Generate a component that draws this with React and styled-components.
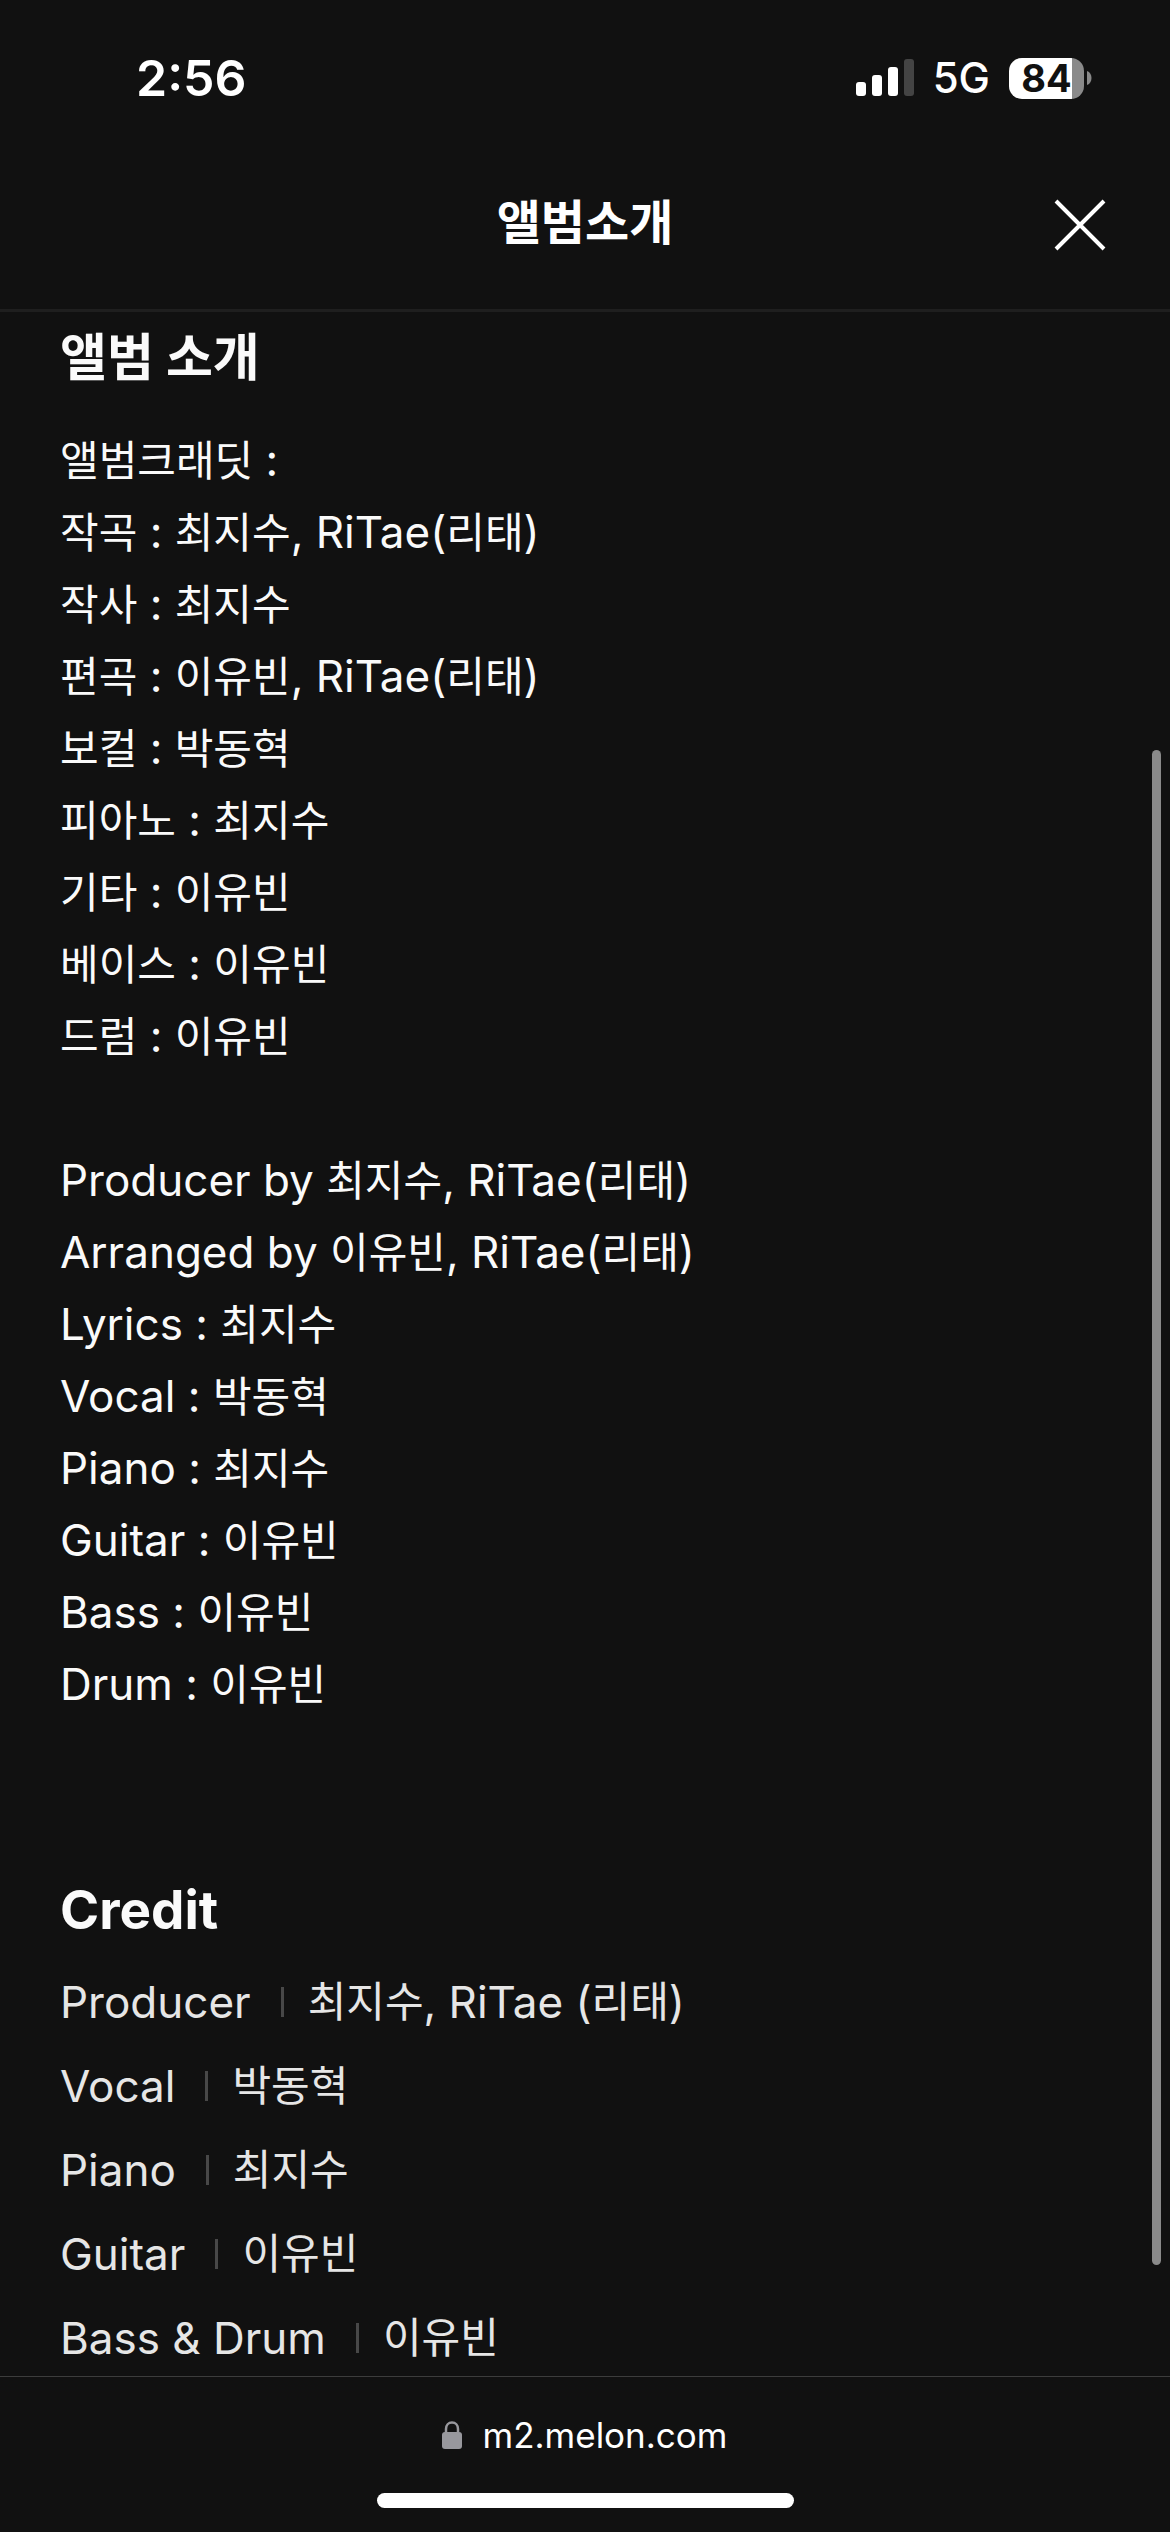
import React from "react";
import styled, { createGlobalStyle } from "styled-components";

const albumCredits = [
  "앨범크래딧 :",
  "작곡 : 최지수, RiTae(리태)",
  "작사 : 최지수",
  "편곡 : 이유빈, RiTae(리태)",
  "보컬 : 박동혁",
  "피아노 : 최지수",
  "기타 : 이유빈",
  "베이스 : 이유빈",
  "드럼 : 이유빈",
  "",
  "Producer by 최지수, RiTae(리태)",
  "Arranged by 이유빈, RiTae(리태)",
  "Lyrics : 최지수",
  "Vocal : 박동혁",
  "Piano : 최지수",
  "Guitar : 이유빈",
  "Bass : 이유빈",
  "Drum : 이유빈",
];

const credits = [
  { role: "Producer", name: "최지수, RiTae (리태)" },
  { role: "Vocal", name: "박동혁" },
  { role: "Piano", name: "최지수" },
  { role: "Guitar", name: "이유빈" },
  { role: "Bass & Drum", name: "이유빈" },
];

// Hangul is drawn a little smaller than the latin text beside it
const MixedText = ({ text }) =>
  text
    .split(/([가-힣]+)/)
    .map((part, i) =>
      i % 2 === 1 ? <Hangul key={i}>{part}</Hangul> : part
    );

const StatusBar = () => (
  <Status>
    <Time>2:56</Time>
    <Indicators>
      <svg width="58" height="38" viewBox="0 0 58 38" aria-hidden="true">
        <rect x="0" y="23" width="10" height="14" rx="3" fill="#fff" />
        <rect x="16" y="16" width="10" height="21" rx="3" fill="#fff" />
        <rect x="32" y="8" width="10" height="29" rx="3" fill="#fff" />
        <rect x="48" y="0" width="10" height="37" rx="3" fill="#444" />
      </svg>
      <Network>5G</Network>
      <BatteryGroup>
        <Battery>84</Battery>
        <svg width="5" height="14" viewBox="0 0 5 14" aria-hidden="true">
          <path d="M0 0C3 1 4.500 4 4.500 7S3 13 0 14Z" fill="#8a8a8a" />
        </svg>
      </BatteryGroup>
    </Indicators>
  </Status>
);

const App = () => {
  return (
    <>
      <GlobalStyle />
      <Page>
        <Header>
          <StatusBar />
          <TitleBar>
            <Title>앨범소개</Title>
            <CloseButton type="button" aria-label="닫기">
              <svg width="52" height="52" viewBox="0 0 52 52" fill="none">
                <path
                  d="M2 2L50 50M50 2L2 50"
                  stroke="#fff"
                  strokeWidth="4"
                />
              </svg>
            </CloseButton>
          </TitleBar>
        </Header>
        <Content>
          <Heading>앨범 소개</Heading>
          <Lines>
            {albumCredits.map((line, i) => (
              <li key={i}>
                <MixedText text={line} />
              </li>
            ))}
          </Lines>
          <Heading $latin>Credit</Heading>
          <CreditList>
            {credits.map(({ role, name }) => (
              <CreditRow key={role}>
                <dt>{role}</dt>
                <dd>
                  <MixedText text={name} />
                </dd>
              </CreditRow>
            ))}
          </CreditList>
          <ScrollThumb />
        </Content>
        <Footer>
          <Address>
            <svg width="20" height="28" viewBox="0 0 20 28" aria-hidden="true">
              <path
                d="M4 13V8C4 4 6.500 1.500 10 1.500S16 4 16 8V13"
                stroke="#98989d"
                strokeWidth="2.500"
                fill="none"
              />
              <rect x="0" y="11" width="20" height="17" rx="3" fill="#98989d" />
            </svg>
            m2.melon.com
          </Address>
          <HomeIndicator />
        </Footer>
      </Page>
    </>
  );
};

const GlobalStyle = createGlobalStyle`
  * {
    box-sizing: border-box;
    margin: 0;
    padding: 0;
  }
  body {
    background: #111;
    color: #fafafa;
    font-family: Inter, "Noto Sans CJK KR", sans-serif;
  }
  svg {
    display: block;
    flex-shrink: 0;
  }
`;

const Page = styled.div`
  height: 100vh;
  display: flex;
  flex-direction: column;
`;

const Header = styled.header`
  border-bottom: 3px solid #1f1f1f;
`;

const Status = styled.div`
  height: 140px;
  padding: 16px 78px 0 136px;
  display: flex;
  align-items: center;
  justify-content: space-between;
`;

const Time = styled.span`
  font-size: 50px;
  font-weight: 600;
  color: #fff;
`;

const Indicators = styled.div`
  display: flex;
  align-items: center;
  gap: 19px;
`;

const Network = styled.span`
  font-size: 42px;
  line-height: 42px;
  font-weight: 500;
  color: #fff;
`;

const BatteryGroup = styled.div`
  display: flex;
  align-items: center;
  gap: 3px;
`;

const Battery = styled.span`
  width: 75px;
  height: 41px;
  border-radius: 13px;
  background: linear-gradient(to right, #fff 84%, #8a8a8a 84%);
  color: #111;
  font-size: 38px;
  line-height: 41px;
  font-weight: 700;
  text-align: center;
`;

const TitleBar = styled.div`
  height: 169px;
  padding: 0 64px;
  display: grid;
  grid-template-columns: 1fr auto 1fr;
  align-items: center;
`;

const Title = styled.h1`
  grid-column: 2;
  padding-bottom: 4px;
  font-size: 48px;
  line-height: 60px;
  font-weight: 600;
  color: #fff;
`;

const CloseButton = styled.button`
  grid-column: 3;
  justify-self: end;
  border: none;
  background: none;
`;

const Content = styled.main`
  position: relative;
  flex: 1;
  min-height: 0;
  overflow: hidden;
  padding: 12px 60px 0;
`;

const Heading = styled.h2`
  font-size: ${({ $latin }) => ($latin ? "53px" : "51px")};
  line-height: 68px;
  font-weight: 700;
`;

const Lines = styled.ul`
  list-style: none;
  margin: 32px 0 156px;
  font-size: 44px;
  line-height: 72px;
  li {
    height: 72px;
  }
`;

const Hangul = styled.span`
  font-size: 42px;
`;

const CreditList = styled.dl`
  margin-top: 16px;
  font-size: 44px;
  line-height: 84px;
  color: #e6e6e6;
`;

const CreditRow = styled.div`
  height: 84px;
  display: flex;
  align-items: center;
  dd {
    display: flex;
    align-items: center;
    white-space: pre;
  }
  dd::before {
    content: "";
    width: 3px;
    height: 30px;
    margin: 0 24px 0 30px;
    background: #484848;
  }
`;

const ScrollThumb = styled.div`
  position: absolute;
  top: 438px;
  right: 9px;
  bottom: 111px;
  width: 9px;
  border-radius: 5px;
  background: #8a8a8a;
`;

const Footer = styled.footer`
  height: 156px;
  border-top: 1px solid #3c3c3c;
  display: flex;
  flex-direction: column;
  align-items: center;
  justify-content: space-between;
  padding: 32px 0 24px;
`;

const Address = styled.div`
  display: flex;
  align-items: center;
  gap: 20px;
  font-size: 35px;
  line-height: 52px;
  color: #fff;
`;

const HomeIndicator = styled.div`
  width: 417px;
  height: 15px;
  border-radius: 8px;
  background: #fff;
`;

export default App;
